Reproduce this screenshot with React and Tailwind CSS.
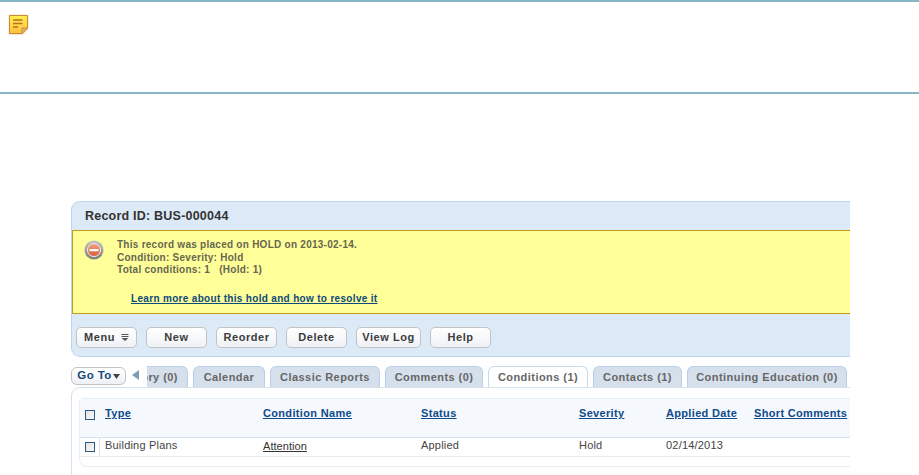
const font = { fontFamily: '"Liberation Sans", Arial, sans-serif' };

function Note() {
  return (
    <svg width="21" height="22" viewBox="0 0 21 22" className="block">
      <defs>
        <linearGradient id="n" x1="0" y1="0" x2="0" y2="1">
          <stop offset="0" stopColor="#fff04a" />
          <stop offset="1" stopColor="#ffc040" />
        </linearGradient>
      </defs>
      <path d="M0.5 0.5H20.5V15L15 21H0.5Z" fill="#f6e3c8" />
      <path d="M1.5 1.5H19.5V14L14 19.5H1.5Z" fill="url(#n)" stroke="#c98a3c" strokeWidth="1" />
      <path d="M14 19.5V14H19.5Z" fill="#e8b878" stroke="#c98a3c" strokeWidth="1" />
      <path d="M5 6H14.5M5 9.5H14.5M5 13H10" stroke="#b8702a" strokeWidth="1.5" />
    </svg>
  );
}

function Stop() {
  return (
    <svg width="20" height="20" viewBox="0 0 20 20" className="block">
      <defs>
        <linearGradient id="ring" x1="0" y1="0" x2="0" y2="1">
          <stop offset="0" stopColor="#c4c4c4" />
          <stop offset="1" stopColor="#7d7d7d" />
        </linearGradient>
        <linearGradient id="red" x1="0" y1="0" x2="0" y2="1">
          <stop offset="0" stopColor="#f4a382" />
          <stop offset="1" stopColor="#dc5a33" />
        </linearGradient>
      </defs>
      <circle cx="10" cy="10" r="9.5" fill="url(#ring)" />
      <circle cx="10" cy="10" r="6.5" fill="url(#red)" stroke="#eeeeee" strokeWidth="1" />
      <rect x="5.5" y="9" width="9" height="2.2" fill="#ffffff" />
    </svg>
  );
}

function Btn({ children, w }) {
  return (
    <div
      className={`${w} h-[21px] shrink-0 flex items-center justify-center whitespace-nowrap rounded-[5px] border border-[#c3c3c3] bg-gradient-to-b from-[#ffffff] to-[#eef1f5] text-[11px] font-bold tracking-[0.55px] text-[#3c3c3c]`}
    >
      {children}
    </div>
  );
}

function Tab({ children, w, active }) {
  return (
    <div
      className={
        active
          ? `${w} h-[21px] shrink-0 flex items-center justify-center whitespace-nowrap rounded-t-[6px] border border-b-0 border-[#c5d9ee] bg-white text-[11px] font-bold tracking-[0.45px] text-[#666666]`
          : `${w} h-[21px] shrink-0 flex items-center justify-center whitespace-nowrap rounded-t-[6px] border border-b-0 border-[#b9d0e8] bg-[#d6e0ec] text-[11px] font-bold tracking-[0.45px] text-[#666666]`
      }
    >
      {children}
    </div>
  );
}

function Check() {
  return <div className="w-[10px] h-[10px] border border-[#2d5a85] bg-gradient-to-br from-[#e2e2e2] to-[#fafafa]" />;
}

function HeadLink({ children, w }) {
  return (
    <div className={`${w} shrink-0 leading-none whitespace-nowrap`}>
      <span className="text-[11px] leading-none font-bold text-[#0f4a8a] underline tracking-[0.33px]">{children}</span>
    </div>
  );
}

function Cell({ children, w, link }) {
  return (
    <div className={link ? `${w} shrink-0 leading-none pb-[4px] whitespace-nowrap` : `${w} shrink-0 leading-none pb-[6px] whitespace-nowrap`}>
      <span className={link ? "text-[11px] leading-none tracking-[0.05px] text-[#333333] underline" : "text-[11px] leading-none tracking-[0.2px] text-[#444444]"}>{children}</span>
    </div>
  );
}

export default function App() {
  return (
    <div className="w-[919px] h-[475px] overflow-hidden bg-white" style={font}>
      <div className="h-[94px] border-y-2 border-[#8ab5c5] pl-[8px] pt-[12px]">
        <Note />
      </div>

      <div className="ml-[71px] mt-[107px] w-[779px] overflow-hidden">
        <div className="h-[156px] rounded-tl-[9px] rounded-bl-[9px] border-l border-t border-b border-[#bcd3ec] bg-[#dce9f6]">
          <div className="h-[28px] flex items-center pl-[13px] pt-[1px] text-[12.5px] font-bold tracking-[0.22px] text-[#333333]">
            Record ID: BUS-000044
          </div>
          <div className="h-[84px] border-y border-[#c49a1c] border-l bg-[#ffff99] flex">
            <div className="w-[44px] shrink-0 pl-[11px] pt-[9px]">
              <Stop />
            </div>
            <div className="text-[10px] leading-[12.5px] font-bold tracking-[0.26px] text-[#666650] pt-[8px]">
              <div>This record was placed on HOLD on 2013-02-14.</div>
              <div>Condition: Severity: Hold</div>
              <div>Total conditions: 1 &nbsp; (Hold: 1)</div>
              <div className="mt-[16px] ml-[14px] tracking-[0.32px] text-[#0f4a7c] underline">Learn more about this hold and how to resolve it</div>
            </div>
          </div>
          <div className="flex items-center gap-[9px] pl-[4px] pt-[13px]">
            <Btn w="w-[61px]">
              <span>Menu</span>
              <svg width="8" height="7" viewBox="0 0 8 7" className="ml-[6px]">
                <path d="M0.5 0.5H7.5M0.5 2.5H7.5" stroke="#555555" strokeWidth="1" />
                <path d="M0.5 4H7.5L4 7Z" fill="#555555" />
              </svg>
            </Btn>
            <Btn w="w-[61px]">New</Btn>
            <Btn w="w-[61px]">Reorder</Btn>
            <Btn w="w-[61px]">Delete</Btn>
            <Btn w="w-[65px]">View Log</Btn>
            <Btn w="w-[61px]">Help</Btn>
          </div>
        </div>

        <div className="flex items-end h-[30px]">
          <div className="w-[55px] h-[18px] mb-[2px] shrink-0 flex items-center justify-center whitespace-nowrap rounded-[6px] border border-[#c3c3c3] bg-gradient-to-b from-white to-[#eef1f5] text-[11.5px] font-bold text-[#174a7c] tracking-[0.4px]">
            Go To
            <svg width="7" height="5" viewBox="0 0 7 5" className="ml-[1px]">
              <path d="M0 0H7L3.5 5Z" fill="#444444" />
            </svg>
          </div>
          <svg width="7" height="10" viewBox="0 0 7 10" className="ml-[6px] mb-[7px] shrink-0">
            <path d="M7 0V10L0 5Z" fill="#7f9cb5" />
          </svg>
          <div className="ml-[8px] flex-1 overflow-hidden flex items-end gap-[5px]">
            <div className="w-[41px] h-[21px] shrink-0 overflow-hidden flex items-center justify-end pr-[9px] whitespace-nowrap rounded-tr-[6px] border-r border-t border-[#b9d0e8] bg-[#d6e0ec] text-[11px] font-bold tracking-[0.45px] text-[#666666]">
              <span className="shrink-0">ory (0)</span>
            </div>
            <Tab w="w-[72px]">Calendar</Tab>
            <Tab w="w-[110px]">Classic Reports</Tab>
            <Tab w="w-[98px]">Comments (0)</Tab>
            <Tab w="w-[100px]" active>Conditions (1)</Tab>
            <Tab w="w-[89px]">Contacts (1)</Tab>
            <Tab w="w-[160px]">Continuing Education (0)</Tab>
          </div>
        </div>

        <div className="h-[88px] rounded-tl-[9px] border-l border-t border-[#d5e2f0] pl-[7px] pt-[10px]">
          <div className="rounded-bl-[8px] rounded-tl-[5px] border-t border-b border-l border-[#e6eef6] h-[69px]">
            <div className="h-[39px] bg-[#f5f9fd] border-b border-[#d5e3f2] flex items-start pt-[5px]">
              <div className="w-[25px] shrink-0 pl-[5px] pt-[6px]">
                <Check />
              </div>
              <HeadLink w="w-[158px]">Type</HeadLink>
              <HeadLink w="w-[158px]">Condition Name</HeadLink>
              <HeadLink w="w-[158px]">Status</HeadLink>
              <HeadLink w="w-[87px]">Severity</HeadLink>
              <HeadLink w="w-[88px]">Applied Date</HeadLink>
              <HeadLink w="w-[100px]">Short Comments</HeadLink>
            </div>
            <div className="h-[19px] border-b border-[#e8ecf0] flex items-center">
              <div className="w-[20px] h-full shrink-0 pl-[5px] border-r border-[#d5e3f2] flex items-center">
                <Check />
              </div>
              <div className="w-[5px] shrink-0" />
              <Cell w="w-[158px]">Building Plans</Cell>
              <Cell w="w-[158px]" link>Attention</Cell>
              <Cell w="w-[158px]">Applied</Cell>
              <Cell w="w-[87px]">Hold</Cell>
              <Cell w="w-[88px]">02/14/2013</Cell>
            </div>
          </div>
        </div>
      </div>
    </div>
  );
}
